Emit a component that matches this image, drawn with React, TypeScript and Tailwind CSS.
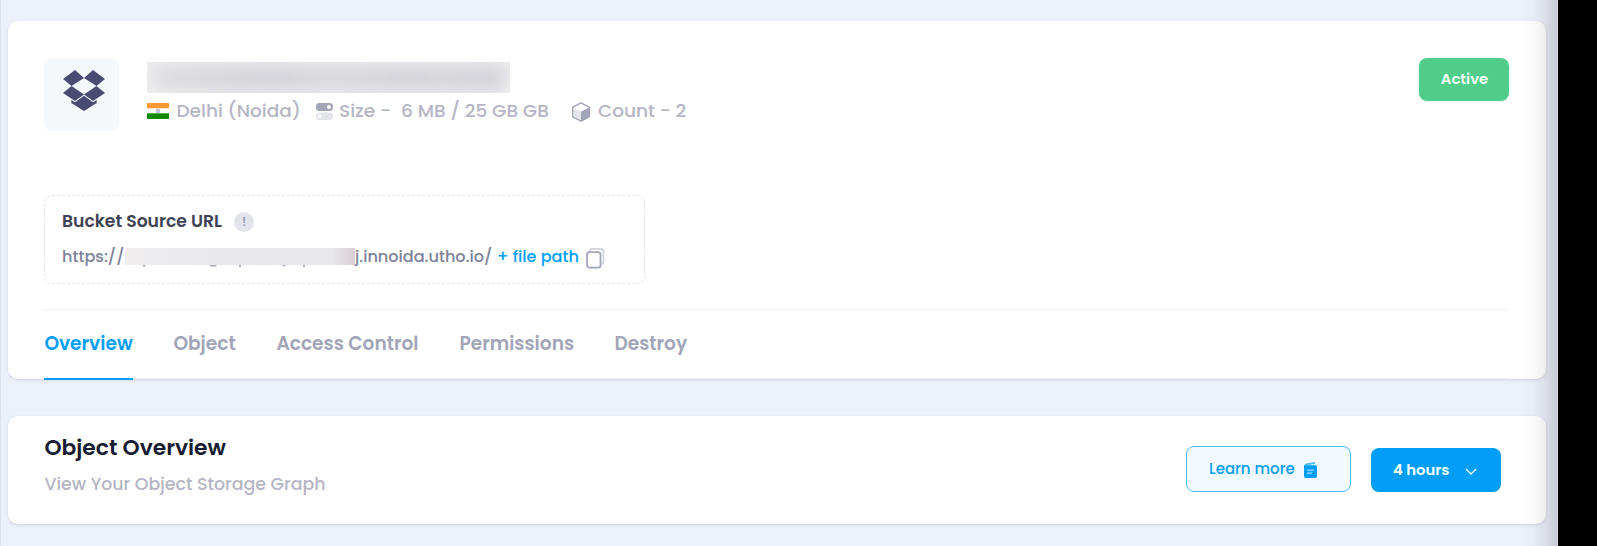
import type { ReactNode } from "react";

function BoxesIcon() {
  return (
    <svg width="42" height="41" viewBox="0 0 42 41" fill="#4a4b73">
      <path d="M12 0 21 8 8.500 16 0 9Z" />
      <path d="M30 0 42 9 33.500 16 21 8Z" />
      <path d="M8.500 16 21 24.500 12 31 0 23Z" />
      <path d="M33.500 16 42 23 30 31 21 24.500Z" />
      <path d="M21 25.800 30 32.300 33.700 30V33L21 41 8.300 33V30L12 32.300Z" />
    </svg>
  );
}

function Flag() {
  return (
    <svg width="22" height="16" viewBox="0 0 22 16">
      <path fill="#fff" d="M0 0h22v16H0z" />
      <path fill="#ff9933" d="M0 0h22v5.300H0z" />
      <path fill="#128807" d="M0 10.300h22V16H0z" />
      <circle cx="11" cy="8" r="1.900" fill="#c4c4e0" stroke="#a2a2ca" strokeWidth=".5" />
    </svg>
  );
}

function SizeIcon() {
  return (
    <svg width="17" height="18" viewBox="0 0 17 18" className="mt-px">
      <rect width="17" height="8" rx="3.500" fill="#a1a5b7" />
      <circle cx="13" cy="4" r="2" fill="#fff" />
      <rect y="9.500" width="17" height="7.500" rx="3.500" fill="#e3e4ea" />
      <circle cx="3.700" cy="13.300" r="2" fill="#fff" />
    </svg>
  );
}

function CubeIcon() {
  return (
    <svg width="18" height="20" viewBox="0 0 18 20" className="mt-px">
      <path d="M9 .8 17.200 5.200V14.800L9 19.200.8 14.800V5.200Z" fill="#fff" stroke="#a1a5b7" strokeWidth="1.500" strokeLinejoin="round" />
      <path d="M1.800 6.200 9 9.800V18L1.800 14.200Z" fill="#e3e4ea" />
      <path d="M9 9.800 17.300 5.200V14.900L9 19.300Z" fill="#a1a5b7" />
    </svg>
  );
}

function CopyIcon() {
  return (
    <svg width="19" height="21" viewBox="0 0 19 21" fill="none" strokeWidth="1.800">
      <path d="M4 4V2.500Q4 1 6 1H15Q17.500 1 17.500 3.500V13.500Q17.500 16 15.500 16" stroke="#d3d5de" />
      <rect x="1" y="4.200" width="13.500" height="15.500" rx="2.500" fill="#fff" stroke="#a1a5b7" />
    </svg>
  );
}

function NotesIcon() {
  return (
    <svg width="13" height="16" viewBox="0 0 13 16" className="mt-px">
      <path d="M0 3.300 2 1.400 11 0V2L1 3.500Z" fill="#4db9fb" />
      <path d="M0 3.300H11.500Q13 3.300 13 5V14Q13 16 11 16H2Q0 16 0 14Z" fill="#009ef7" />
      <path d="M3 8.200H10M3 11.200H8" stroke="#9ddaff" strokeWidth="1.300" />
    </svg>
  );
}

function Tab({ children, className }: { children: ReactNode; className: string }) {
  return (
    <div className={`shrink-0 whitespace-nowrap pl-[0.4px] text-[18.6px] font-semibold leading-[68px] ${className}`}>
      {children}
    </div>
  );
}

export default function App() {
  return (
    <div className="flex h-[546px] w-[1597px] overflow-hidden bg-black font-[Poppins,Inter,sans-serif]">
      <div className="relative h-full w-[1558px] border-l border-[#dde1ec] bg-[#ecf0f9] pl-[7px] pt-[21px]">
        <section className="h-[358px] w-[1538px] rounded-[10px] bg-white pl-9 pr-[37px] shadow-[0_1px_3px_rgba(60,70,110,0.18)]">
          <div className="flex h-[174px] pt-[37px]">
            <div className="flex h-[73px] w-[75px] justify-center rounded-lg bg-[#f4f8fb] pl-1 pt-3">
              <BoxesIcon />
            </div>
            <div className="ml-7 grow pt-1">
              <div className="h-[31px] w-[363px] overflow-hidden bg-[#efeff1] px-1.5 py-1">
                <div className="h-full w-full bg-[linear-gradient(90deg,#dcdbdf,#d5d4d9_15%,#cfced5_35%,#d7d6db_50%,#d0cfd6_72%,#d3d2d8_84%,#cdccd4)] blur-[9px]" />
              </div>
              <div className="flex h-9 items-center whitespace-nowrap text-[18.5px] font-medium text-[#b5b5c3]">
                <Flag />
                <span className="-mt-px ml-[7.500px] w-[139.5px]">Delhi (Noida)</span>
                <SizeIcon />
                <span className="-mt-px ml-1.5 w-[62px]">Size -</span>
                <span className="-mt-px w-[171px]">6 MB / 25 GB GB</span>
                <CubeIcon />
                <span className="-mt-px ml-2">Count - 2</span>
              </div>
            </div>
            <div className="h-[43px] w-[90px] rounded-lg bg-[#50cd89] pl-px text-center text-[14.8px] font-semibold leading-[41px] text-white">
              Active
            </div>
          </div>
          <div className="h-[89px] w-[601px] rounded-lg border border-dashed border-[#e4e6ef] pl-[17px] pt-[13px]">
            <div className="flex items-center whitespace-nowrap text-[17.2px] font-semibold leading-6 text-[#3f4254]">
              <span className="w-[172px]">Bucket Source URL</span>
              <span className="mt-0.5 flex h-5 w-5 items-center justify-center rounded-full bg-[#e3e4ec] text-[13px] font-medium text-[#8f93a8]">!</span>
            </div>
            <div className="mt-3 flex items-center whitespace-nowrap text-[16.100px] font-medium leading-6 text-[#7e8299]">
              <span className="w-[63px]">https://</span>
              <span className="-mt-px h-[17px] w-[230px] bg-[linear-gradient(90deg,#f1eeef,#ebebee_20%,#e6e6eb_60%,#e9e8ec_90%,#d9cfd3)]">
                <svg width="230" height="19" viewBox="0 0 230 19" fill="#a9acbd">
                  <path d="M18 17h3l-1 1.500h-2zM84 17h8l-1 1.500h-5zM114 17h2v2h-2zM158 17h2.500l-1 1.500h-2zM178 17h2v2h-2z" />
                </svg>
              </span>
              <span className="w-[142px]">j.innoida.utho.io/</span>
              <span className="w-[89px] text-[#009ef7]">+ file path</span>
              <span className="pt-[3px]"><CopyIcon /></span>
            </div>
          </div>
          <div className="mt-[25px] flex h-[70px] w-[1465px] border-b border-t border-[#eff2f5]">
            <Tab className="h-[70px] w-[89px] border-b-2 border-[#009ef7] text-[#009ef7]">Overview</Tab>
            <Tab className="ml-10 w-[64px] text-[#a1a5b7]">Object</Tab>
            <Tab className="ml-[39px] w-[142px] text-[#a1a5b7]">Access Control</Tab>
            <Tab className="ml-[41px] w-[116px] text-[#a1a5b7]">Permissions</Tab>
            <Tab className="ml-[39px] w-[74px] text-[#a1a5b7]">Destroy</Tab>
          </div>
        </section>
        <section className="mt-[37px] flex h-[108px] w-[1538px] rounded-[10px] bg-white pl-9 pr-[45px] shadow-[0_1px_3px_rgba(60,70,110,0.18)]">
          <div className="grow whitespace-nowrap pl-[0.4px] pt-4">
            <h2 className="text-[21.8px] font-semibold leading-8 text-[#181c32]">Object Overview</h2>
            <p className="mt-2 text-[17.4px] font-medium leading-6 text-[#b5b5c3]">View Your Object Storage Graph</p>
          </div>
          <button className="mt-[30px] flex h-[46px] w-[165px] items-center rounded-lg border border-[#50bdf9] bg-[#f1faff] pl-[22px] text-[15px] font-medium text-[#009ef7]">
            <span className="w-[95px] text-left">Learn more</span>
            <NotesIcon />
          </button>
          <button className="ml-5 mt-8 flex h-[44px] w-[130px] items-center rounded-lg bg-[#009ef7] pl-[22px] text-[14.8px] font-semibold text-white">
            <span className="w-[72px] text-left">4 hours</span>
            <svg width="12" height="8" viewBox="0 0 12 8" fill="none" stroke="#fff" strokeWidth="1.300" className="mt-[3px]">
              <path d="m1 1 5 5 5-5" />
            </svg>
          </button>
        </section>
        <div className="pointer-events-none absolute inset-y-0 right-0 w-9 border-r border-[#d5d8df] bg-[linear-gradient(90deg,transparent,rgba(0,0,0,0.015)_30%,rgba(0,0,0,0.07)_66%,rgba(0,0,0,0.16))]" />
      </div>
    </div>
  );
}
